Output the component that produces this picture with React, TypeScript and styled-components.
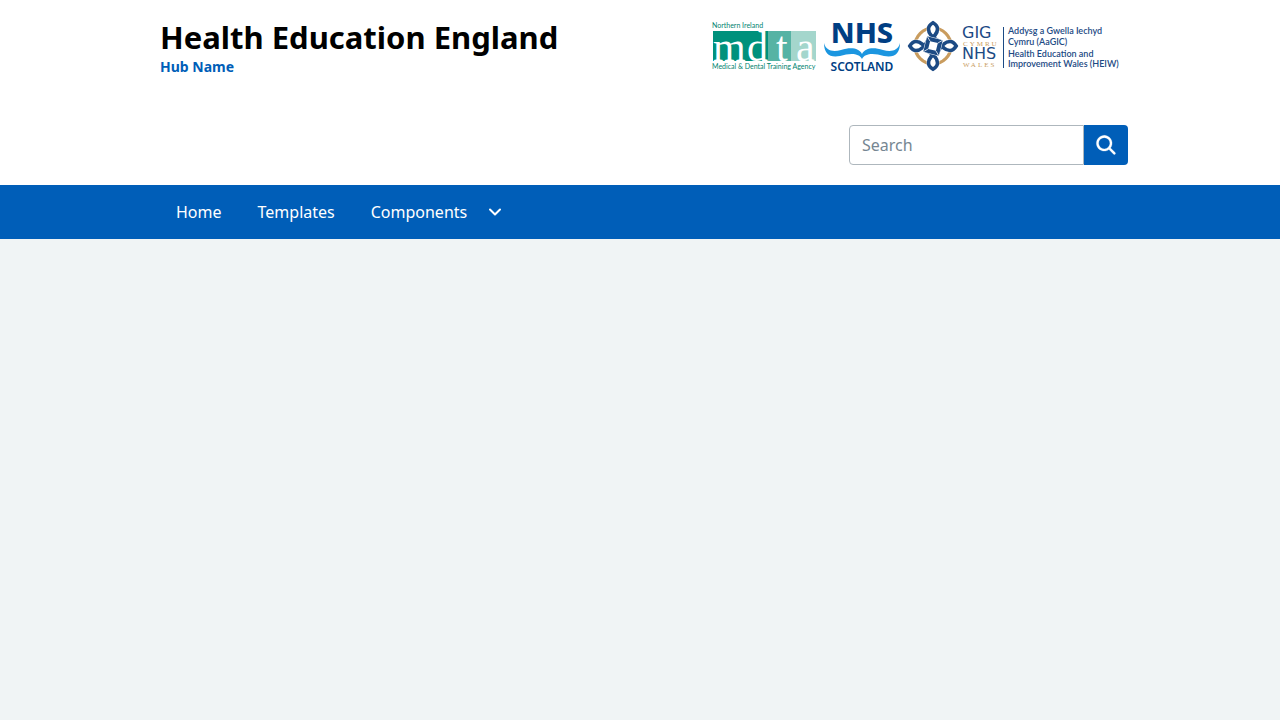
import React from "react";
import styled, { createGlobalStyle } from "styled-components";

const BLUE = "#005eb8";
const NAVY = "#1c4a84";
const GOLD = "#c99c5e";
const SANS = '"Noto Sans", "Open Sans", sans-serif';

const GlobalStyle = createGlobalStyle`
  *, *::before, *::after { box-sizing: border-box; }
  body {
    margin: 0;
    background: #f0f4f5;
    color: #000;
    font-family: ${SANS};
    font-size: 16px;
    line-height: 24px;
  }
`;

const Container = styled.div`
  max-width: 976px;
  margin: 0 auto;
  padding-left: 8px;
`;

const Header = styled.header`
  background: #fff;
  padding: 20px 0;
`;

const BrandRow = styled.div`
  display: flex;
  justify-content: space-between;
  align-items: flex-start;
`;

const Brand = styled.a`
  display: block;
  color: #000;
  text-decoration: none;
`;

const Organisation = styled.span`
  display: block;
  font-size: 31px;
  font-weight: 700;
  line-height: 34px;
`;

const HubName = styled.span`
  display: block;
  color: ${BLUE};
  font-size: 14px;
  font-weight: 700;
  line-height: 26px;
`;

const Logos = styled.div`
  display: flex;
  padding-top: 1px;
`;

const LogoLink = styled.a`
  display: block;
  margin-right: 8px;
  svg { display: block; overflow: visible; }
`;

const SearchForm = styled.form`
  display: flex;
  justify-content: flex-end;
  margin-top: 45px;
`;

const SearchInput = styled.input`
  width: 235px;
  height: 40px;
  padding: 0 12px;
  border: 1px solid #aeb7bd;
  border-radius: 4px 0 0 4px;
  background: #fff;
  color: #212b32;
  font: inherit;
  &::placeholder { color: #768692; opacity: 1; }
`;

const SearchButton = styled.button`
  display: flex;
  align-items: center;
  justify-content: center;
  width: 44px;
  height: 40px;
  padding: 0;
  border: 0;
  border-radius: 0 4px 4px 0;
  background: ${BLUE};
  cursor: pointer;
`;

const Nav = styled.nav`
  background: ${BLUE};
`;

const NavList = styled.ul`
  display: flex;
  gap: 4px;
  margin: 0;
  padding: 0;
  list-style: none;
`;

const NavLink = styled.a`
  display: block;
  padding: 15px 16px;
  color: #fff;
  text-decoration: none;
`;

const NavButton = styled.button`
  display: flex;
  align-items: center;
  gap: 16px;
  padding: 15px 16px;
  border: 0;
  background: none;
  color: #fff;
  font: inherit;
  cursor: pointer;
`;

const MdtaLogo = () => (
  <svg width="104" height="52" viewBox="0 0 104 52" role="img" aria-label="Northern Ireland Medical and Dental Training Agency">
    <rect x="1" y="10" width="55" height="30" fill="#00917c" />
    <rect x="56" y="10" width="23" height="30" fill="#56b3a4" />
    <rect x="79" y="10" width="25" height="30" fill="#a4d6cc" />
    <g fill="#fff" fontFamily="'Liberation Serif', serif" fontSize="42">
      <text x="1" y="40">m</text>
      <text x="35" y="40">d</text>
      <text x="64" y="40">t</text>
      <text x="84" y="40">a</text>
    </g>
    <g fill="#00836f" fontFamily="Lato, sans-serif" fontSize="7">
      <text x="0" y="7">Northern Ireland</text>
      <text x="0" y="48">Medical &amp; Dental Training Agency</text>
    </g>
  </svg>
);

const ScotlandLogo = () => (
  <svg width="76" height="52" viewBox="0 0 76 52" role="img" aria-label="NHS Scotland">
    <g fill="#003e83" fontFamily={SANS} textAnchor="middle">
      <text x="38" y="22" fontSize="29" fontWeight="800">NHS</text>
      <text x="38" y="50" fontSize="12" fontWeight="600">SCOTLAND</text>
    </g>
    <path
      d="M0 22 C2 30 9 31 17 29 C27 26 35 27 38 33 C41 27 49 26 59 29 C67 31 74 30 76 22 C76 33 70 37 60 35 C50 32 41 32 38 38 C35 32 26 32 16 35 C6 37 0 33 0 22 Z"
      fill="#1b96e0"
    />
  </svg>
);

const WalesLogo = () => (
  <svg width="212" height="52" viewBox="0 0 212 52" role="img" aria-label="Health Education and Improvement Wales">
    <circle cx="25" cy="25" r="18" fill="none" stroke={GOLD} strokeWidth="3.200" />
    {[0, 90, 180, 270].map((angle) => (
      <g key={angle} transform={`rotate(${angle} 25 25)`} fill="none">
        <path d="M25 17 C18 13 20 3 25 2 C30 3 32 13 25 17 Z" fill="#fff" stroke="#fff" strokeWidth="4" />
        <path
          d="M31 20 C25 17 20.500 13 20.500 8 C20.500 5 23 3 25 1.800 C27 3 29.500 5 29.500 8 C29.500 13 26 16 20 20"
          stroke={NAVY}
          strokeWidth="3.600"
        />
      </g>
    ))}
    <g transform="rotate(14 25 25)" fill="none">
      <rect x="19" y="19" width="12" height="12" stroke="#fff" strokeWidth="5" />
      <rect x="19" y="19" width="12" height="12" fill="#fff" stroke={NAVY} strokeWidth="4" />
      {[0, 90, 180, 270].map((angle) => (
        <path key={angle} transform={`rotate(${angle} 25 25)`} d="M17 17 L21 21" stroke="#fff" strokeWidth="0.700" />
      ))}
    </g>
    <g fontFamily="'DejaVu Sans', sans-serif" fill={NAVY} fontSize="16">
      <text x="54" y="17">GIG</text>
      <text x="54" y="38">NHS</text>
    </g>
    <g fontFamily="'Liberation Serif', serif" fill={GOLD} fontSize="7" letterSpacing="2">
      <text x="55" y="25">CYMRU</text>
      <text x="55" y="46">WALES</text>
    </g>
    <rect x="95" y="6" width="1" height="41" fill={NAVY} />
    <g fontFamily="Lato, sans-serif" fill={NAVY} fontSize="9" fontWeight="600">
      <text x="100" y="13">Addysg a Gwella Iechyd</text>
      <text x="100" y="24">Cymru (AaGIC)</text>
      <text x="100" y="36">Health Education and</text>
      <text x="100" y="46">Improvement Wales (HEIW)</text>
    </g>
  </svg>
);

const SearchIcon = () => (
  <svg width="27" height="27" viewBox="0 0 24 24" fill="#fff" stroke="#fff" strokeWidth="0.200" aria-hidden="true">
    <path d="M19.71 18.29l-4.11-4.1a7 7 0 1 0-1.41 1.41l4.1 4.11a1 1 0 0 0 1.42 0 1 1 0 0 0 0-1.42zM5 10a5 5 0 1 1 5 5 5 5 0 0 1-5-5z" />
  </svg>
);

const ChevronIcon = () => (
  <svg width="24" height="24" viewBox="0 0 24 24" fill="#fff" aria-hidden="true">
    <path
      transform="rotate(90 12 12)"
      d="M15.5 12a1 1 0 0 1-.29.71l-5 5a1 1 0 0 1-1.42-1.42l4.3-4.29-4.3-4.29a1 1 0 0 1 1.42-1.42l5 5a1 1 0 0 1 .29.71z"
    />
  </svg>
);

export default function App() {
  return (
    <>
      <GlobalStyle />
      <Header>
        <Container>
          <BrandRow>
            <Brand href="#">
              <Organisation>Health Education England</Organisation>
              <HubName>Hub Name</HubName>
            </Brand>
            <Logos>
              <LogoLink href="#"><MdtaLogo /></LogoLink>
              <LogoLink href="#"><ScotlandLogo /></LogoLink>
              <LogoLink href="#"><WalesLogo /></LogoLink>
            </Logos>
          </BrandRow>
          <SearchForm role="search" onSubmit={(event) => event.preventDefault()}>
            <SearchInput type="search" placeholder="Search" aria-label="Search" />
            <SearchButton type="submit" aria-label="Submit search"><SearchIcon /></SearchButton>
          </SearchForm>
        </Container>
      </Header>
      <Nav aria-label="Primary navigation">
        <Container>
          <NavList>
            <li><NavLink href="#">Home</NavLink></li>
            <li><NavLink href="#">Templates</NavLink></li>
            <li>
              <NavButton type="button" aria-expanded="false">
                Components
                <ChevronIcon />
              </NavButton>
            </li>
          </NavList>
        </Container>
      </Nav>
    </>
  );
}
